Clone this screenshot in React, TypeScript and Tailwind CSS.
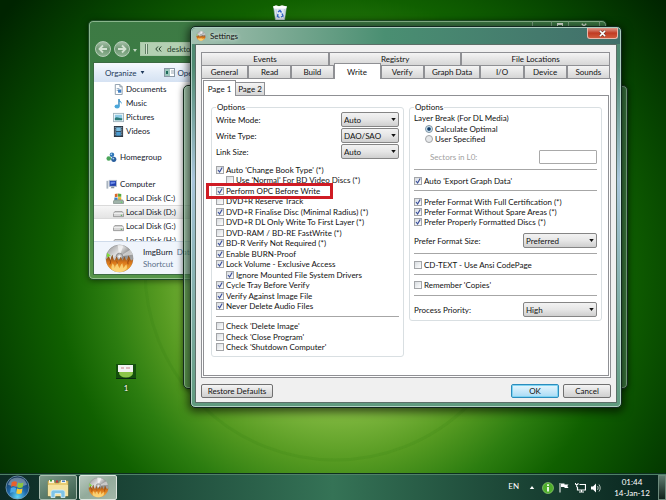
import { clsx } from 'clsx'
import type { ReactNode } from 'react'

const categoryTabs = [
  { label: 'Events', size: 'flex-[128]' },
  { label: 'Registry', size: 'flex-[132]' },
  { label: 'File Locations', size: 'flex-[149]' }
]

const settingTabs = [
  { label: 'General', size: 'flex-[47]' },
  { label: 'Read', size: 'flex-[43]' },
  { label: 'Build', size: 'flex-[42]' },
  { label: 'Write', size: 'flex-[47]' },
  { label: 'Verify', size: 'flex-[43]' },
  { label: 'Graph Data', size: 'flex-[57]' },
  { label: 'I/O', size: 'flex-[43]' },
  { label: 'Device', size: 'flex-[43]' },
  { label: 'Sounds', size: 'flex-[43]' }
]

const writeOptions = [
  { label: "Auto 'Change Book Type' (*)", checked: true },
  { label: "Use 'Normal' For BD Video Discs (*)", indent: true },
  { label: 'Perform OPC Before Write', checked: true, marked: true },
  { label: 'DVD+R Reserve Track' },
  { label: 'DVD+R Finalise Disc (Minimal Radius) (*)', checked: true },
  { label: 'DVD+R DL Only Write To First Layer (*)' },
  { label: 'DVD-RAM / BD-RE FastWrite (*)' },
  { label: 'BD-R Verify Not Required (*)', checked: true },
  { label: 'Enable BURN-Proof', checked: true },
  { label: 'Lock Volume - Exclusive Access', checked: true },
  { label: 'Ignore Mounted File System Drivers', checked: true, indent: true },
  { label: 'Cycle Tray Before Verify', checked: true },
  { label: 'Verify Against Image File', checked: true },
  { label: 'Never Delete Audio Files', checked: true }
]

const afterOptions = ["Check 'Delete Image'", "Check 'Close Program'", "Check 'Shutdown Computer'"]

const libraries = ['Documents', 'Music', 'Pictures', 'Videos']
const disks = ['Local Disk (C:)', 'Local Disk (D:)', 'Local Disk (G:)', 'Local Disk (H:)']

function Disc({ className }: { className?: string }) {
  return (
    <svg viewBox="0 0 30 30" className={className} aria-hidden="true">
      <defs>
        <linearGradient id="disc" x1="0" y1="0" x2="1" y2="1">
          <stop offset="0" stopColor="#8c8c8c" />
          <stop offset="0.35" stopColor="#dedede" />
          <stop offset="0.55" stopColor="#8e8e8e" />
          <stop offset="1" stopColor="#c8c8c8" />
        </linearGradient>
        <linearGradient id="flame" x1="0" y1="0" x2="0" y2="1">
          <stop offset="0" stopColor="#6b4420" />
          <stop offset="0.45" stopColor="#d9761a" />
          <stop offset="1" stopColor="#f9b63c" />
        </linearGradient>
      </defs>
      <circle cx="15" cy="15" r="14" fill="url(#disc)" stroke="#8b8b8b" strokeWidth="0.6" />
      <path d="M15 13 13 1a14 14 0 0 1 6 .5z" fill="#fff" opacity="0.6" />
      <path d="M15 13 26 6a14 14 0 0 1 2.5 5z" fill="#fff" opacity="0.5" />
      <circle cx="15" cy="13" r="3.4" fill="#bdbdbd" stroke="#777" strokeWidth="0.7" />
      <circle cx="15" cy="13" r="1.3" fill="#f4f4f4" />
      <path
        d="M1 15c1 1 2-1 2-3 2 2 2 3 3 5 0-2 0-4 2-6 0 3 1 5 2 6 1-1 1-3 2-4 1 1 1 3 2 4 1-1 2-2 2-4 1 1 1 2 2 4 1-1 1-2 2-4 1 1 1 3 2 4 1-1 2-3 2-5 2 2 2 4 3 5 1 0 2-1 2-2C29 23 23 29 15 29S1 23 1 15z"
        fill="url(#flame)"
      />
      <path d="M7 26c-1-2 0-4 1-6 1 2 2 2 2 5 1-2 1-4 3-6 0 3 1 4 2 6 1-1 1-4 3-5 0 2 1 3 1 5 1-1 2-3 3-4 1 2 1 4 0 5-4 4-11 4-15 0z" fill="#ffe28a" opacity="0.75" />
      <path d="M5 21c1-2 1-3 0-5M24 21c-1-2 0-3 1-5M12 18c1 1 1 2 0 3" fill="none" stroke="#8a3c0c" strokeWidth="0.8" />
      <path d="M2 9l4 3-4 2z" fill="#7ddc3c" />
    </svg>
  )
}

function CheckRow({ label, checked, indent, marked }: { label: string; checked?: boolean; indent?: boolean; marked?: boolean }) {
  return (
    <label className={clsx('relative flex h-[10px] items-center gap-[2px] whitespace-nowrap', indent && 'ml-[10px]')}>
      <span className="relative flex size-2">
        <input
          type="checkbox"
          defaultChecked={checked}
          className="peer size-2 appearance-none border border-[#a3a5a8] bg-linear-to-br from-[#d8dce0] to-white"
        />
        <svg viewBox="0 0 8 8" className="pointer-events-none absolute inset-0 hidden size-2 peer-checked:block" aria-hidden="true">
          <path d="M2 4l1.600 2L6.200 1.500" fill="none" stroke="#3b4f9a" strokeWidth="1.2" />
        </svg>
      </span>
      {label}
      {marked && <span className="pointer-events-none absolute -inset-y-[3px] -left-[10px] z-10 w-[127px] border-[3px] border-[#cf1c24]" />}
    </label>
  )
}

function SelectRow({ label, value, wide }: { label: string; value: string; wide?: boolean }) {
  return (
    <label className="flex h-[15px] items-center justify-between">
      {label}
      <span className={clsx('relative flex', wide ? 'w-[74px]' : 'w-[58px]')}>
        <select
          defaultValue={value}
          className="h-[15px] w-full appearance-none rounded-[2px] border border-[#858585] bg-linear-to-b from-[#f2f2f2] via-[#e6e6e6] to-[#cfcfcf] pl-[2px] leading-[10px]"
        >
          <option>{value}</option>
        </select>
        <svg viewBox="0 0 6 4" className="pointer-events-none absolute top-[6px] right-[3px] h-[3px] w-[5px]" aria-hidden="true">
          <path d="M0 0h6L3 4z" fill="#111" />
        </svg>
      </span>
    </label>
  )
}

function Rule({ className }: { className?: string }) {
  return <hr className={clsx('h-px shrink-0 border-0 bg-[#a6a6a6]', className)} />
}

function Group({ children, className }: { children: ReactNode; className?: string }) {
  return (
    <fieldset className={clsx('min-w-0 rounded-[3px] border border-[#d9dfe2] px-[4px]', className)}>
      <legend className="px-px leading-[10px]">Options</legend>
      {children}
    </fieldset>
  )
}

function PushButton({ children, className }: { children: ReactNode; className: string }) {
  return <button className={clsx('h-[14px] rounded-[2px] border leading-[10px]', className)}>{children}</button>
}

function SettingsDialog() {
  return (
    <section
      aria-label="Settings"
      className="absolute top-[26px] left-[190px] flex h-[382px] w-[432px] flex-col rounded-[5px] border border-[#12281f] bg-linear-to-b from-[#4f8a72] from-10% via-[#a9c6dc] via-40% to-[#5f9a7e] px-[4px] pb-[4px] shadow-[0_2px_8px_2px_rgba(0,0,0,0.6),inset_0_0_0_1px_rgba(235,250,245,0.6)]"
    >
      <header className="-mx-[3px] mt-px flex h-[16px] shrink-0 items-center rounded-t-[4px] bg-linear-to-r from-[#a3c1b1] via-[#4a8f72] via-45% to-[#416f6a] pl-[4px]">
        <Disc className="size-[10px]" />
        <h1 className="ml-[4px] leading-[12px] text-shadow-[0_0_4px_white]">Settings</h1>
        <button
          aria-label="Close"
          className="mr-[2px] ml-auto flex h-[11px] w-[31px] items-center justify-center self-start rounded-b-[3px] border border-t-0 border-[#e9b9ad] bg-linear-to-b from-[#dd9a8c] via-[#c03a22] via-50% to-[#d05a3c]"
        >
          <svg viewBox="0 0 8 8" className="size-[7px]" aria-hidden="true">
            <path d="M1 1l6 6M7 1 1 7" stroke="#5c2a22" strokeWidth="3" />
            <path d="M1 1l6 6M7 1 1 7" stroke="#fff" strokeWidth="1.8" />
          </svg>
        </button>
      </header>

      <div className="flex min-h-0 flex-1 flex-col border border-[#5c6f68] bg-[#f0f0f0] px-[5px] pt-[7px] pb-[4px]">
        <div role="tablist" aria-label="Categories" className="mr-px flex h-[13px] shrink-0">
          {categoryTabs.map((tab) => (
            <button
              key={tab.label}
              role="tab"
              className={clsx('border border-b-0 border-[#8f9094] bg-linear-to-b from-[#f4f4f4] to-[#d6d6d6] text-center leading-[10px]', tab.size)}
            >
              {tab.label}
            </button>
          ))}
        </div>
        <div role="tablist" aria-label="Settings" className="mr-px flex h-[13px] shrink-0 items-end">
          {settingTabs.map((tab) => (
            <button
              key={tab.label}
              role="tab"
              aria-selected={tab.label === 'Write'}
              className={clsx(
                'border border-b-0 border-[#8f9094] text-center leading-[10px]',
                tab.size,
                tab.label === 'Write' ? 'z-10 -mb-px h-[16px] bg-white' : 'h-[13px] bg-linear-to-b from-[#f4f4f4] to-[#d6d6d6]'
              )}
            >
              {tab.label}
            </button>
          ))}
        </div>

        <div className="flex min-h-0 flex-1 flex-col border border-[#8f9094] bg-white px-px pt-px pb-px">
          <div role="tablist" aria-label="Pages" className="flex h-[15px] shrink-0 items-end">
            <button role="tab" aria-selected="true" className="z-10 -mb-px h-[16px] w-[33px] border border-b-0 border-[#8f9094] bg-white leading-[10px]">
              Page 1
            </button>
            <button role="tab" className="h-[13px] w-[29px] border border-b-0 border-l-0 border-[#8f9094] bg-linear-to-b from-[#f4f4f4] to-[#d6d6d6] leading-[10px]">
              Page 2
            </button>
          </div>
          <div className="grid min-h-0 flex-1 grid-cols-2 gap-[5px] border border-[#8f9094] pt-[6px] pr-[6px] pb-[18px] pl-[7px]">
            <Group className="flex flex-col pb-[4px]">
              <div className="flex flex-col gap-px">
                <SelectRow label="Write Mode:" value="Auto" />
                <SelectRow label="Write Type:" value="DAO/SAO" />
                <SelectRow label="Link Size:" value="Auto" />
              </div>
              <div className="mt-[6px] flex flex-1 flex-col justify-between">
                {writeOptions.map((option) => (
                  <CheckRow key={option.label} {...option} />
                ))}
                <Rule className="my-[4px]" />
                {afterOptions.map((label) => (
                  <CheckRow key={label} label={label} />
                ))}
              </div>
            </Group>

            <Group className="flex flex-col self-start pb-[3px]">
              <div className="leading-[12px]">Layer Break (For DL Media)</div>
              {['Calculate Optimal', 'User Specified'].map((label, index) => (
                <label key={label} className="ml-[11px] flex h-[10px] items-center gap-[2px]">
                  <input
                    type="radio"
                    name="layer-break"
                    defaultChecked={index === 0}
                    className="size-2 appearance-none rounded-full border border-[#a3a5a8] bg-[#e6e8ea] checked:border-[#7f93a3] checked:bg-[radial-gradient(circle,#123a66_0_30%,#cfe6f4_55%)]"
                  />
                  {label}
                </label>
              ))}
              <label className="mt-[6px] flex h-[14px] items-center justify-between pl-[16px] text-[#a0a0a0]">
                Sectors in L0:
                <input type="text" disabled className="h-[14px] w-[58px] rounded-[1px] border border-[#a9a9a9] bg-white px-[2px]" />
              </label>
              <Rule className="mt-[5px] mb-[6px]" />
              <CheckRow label="Auto 'Export Graph Data'" checked />
              <Rule className="mt-[4px] mb-[6px]" />
              <CheckRow label="Prefer Format With Full Certification (*)" checked />
              <CheckRow label="Prefer Format Without Spare Areas (*)" checked />
              <CheckRow label="Prefer Properly Formatted Discs (*)" checked />
              <div className="mt-[6px]">
                <SelectRow label="Prefer Format Size:" value="Preferred" wide />
              </div>
              <Rule className="mt-[5px] mb-[6px]" />
              <CheckRow label="CD-TEXT - Use Ansi CodePage" />
              <Rule className="mt-[4px] mb-[5px]" />
              <CheckRow label="Remember 'Copies'" />
              <Rule className="mt-[5px] mb-[6px]" />
              <SelectRow label="Process Priority:" value="High" wide />
            </Group>
          </div>
        </div>

        <footer className="mt-[6px] flex shrink-0 gap-[4px]">
          <PushButton className="mr-auto w-[72px] border-[#707070] bg-linear-to-b from-[#f4f4f4] to-[#cfcfcf]">Restore Defaults</PushButton>
          <PushButton className="w-[48px] border-[#2c8cbc] bg-linear-to-b from-[#e6f6fd] to-[#a9dbf5] shadow-[inset_0_0_0_1px_#7fd4f2]">OK</PushButton>
          <PushButton className="w-[48px] border-[#707070] bg-linear-to-b from-[#f4f4f4] to-[#cfcfcf]">Cancel</PushButton>
        </footer>
      </div>
    </section>
  )
}

function NavIcon({ name }: { name: string }) {
  return (
    <svg viewBox="0 0 12 12" className="size-[11px] shrink-0" aria-hidden="true">
      {name === 'Documents' && (
        <>
          <path d="M2.5.5h5L10 3v8.500H2.5z" fill="#fff" stroke="#8a9aa8" />
          <path d="M7.5.5V3H10" fill="none" stroke="#8a9aa8" />
          <path d="M4 5h3M4 7h2" stroke="#8fa5b8" />
          <rect x="5.500" y="6" width="3.5" height="3.5" fill="#3f7ec2" />
        </>
      )}
      {name === 'Music' && (
        <>
          <path d="M6.500 1v8" stroke="#2f83b8" strokeWidth="1.5" />
          <path d="M6.500 1c1 2.500 3.500 2.500 3 6-.5-2-1.500-2.500-3-3z" fill="#3e9ad0" />
          <ellipse cx="4.5" cy="9.3" rx="2.8" ry="2.2" fill="#4aa7db" />
        </>
      )}
      {name === 'Pictures' && (
        <>
          <rect x="0.5" y="1.5" width="11" height="9" fill="#f3f8fa" stroke="#9eb3bd" />
          <rect x="2" y="3" width="8" height="6" fill="#8fcbe6" />
          <path d="M2 9V6.500c3-2 5 1 8 0V9z" fill="#2c7a78" />
        </>
      )}
      {name === 'Videos' && (
        <>
          <rect x="1.5" y="0.5" width="9" height="11" fill="#34495c" stroke="#26323e" />
          <rect x="3.5" y="1.5" width="5" height="4" fill="#7fc0e4" />
          <rect x="3.5" y="6.5" width="5" height="4" fill="#4c9bd0" />
          <path d="M2.5 1v10M9.5 1v10" stroke="#dfe8ee" strokeWidth="0.7" strokeDasharray="1 1" />
        </>
      )}
      {name === 'Homegroup' && (
        <>
          <circle cx="6.5" cy="3" r="2.5" fill="#2f76b8" />
          <circle cx="3" cy="7" r="2.5" fill="#4ca65a" />
          <circle cx="8.5" cy="8" r="2.8" fill="#2b5f9e" />
          <circle cx="8" cy="7.2" r="1" fill="#9fd2ee" />
          <circle cx="5.8" cy="2.4" r="0.9" fill="#b5dcf3" />
        </>
      )}
      {name === 'Computer' && (
        <>
          <rect x="0.5" y="2" width="2" height="8.5" fill="#a9b4bf" />
          <rect x="3.5" y="1.5" width="8" height="6.5" fill="#1f3fae" stroke="#b4bfcc" />
          <path d="M5 3h5v1.500L5 6z" fill="#6c8be8" />
          <path d="M6 8.500h3V10H5z" fill="#8894a0" />
        </>
      )}
      {name === 'Local Disk (C:)' && (
        <>
          <path d="M2 1l3-.5V4l-3 .5z" fill="#d9692a" />
          <path d="M5.500.5 9 1v3H5.500z" fill="#58a83c" />
          <path d="M1.500 5H5v2.500H1.500z" fill="#3c7fc4" />
          <path d="M5.500 4.500H9v3H5.500z" fill="#e5bb33" />
          <path d="M1.500 7.500h9l1 1.500v2.500H.5V9z" fill="#9fb3a9" stroke="#66786f" strokeWidth="0.6" />
          <rect x="8.500" y="9.500" width="1.5" height="1" fill="#4be04b" />
        </>
      )}
      {/Disk \([DGH]/.test(name) && (
        <>
          <path d="M2 5h8l1.500 2v3.500H.5V7z" fill="#d6d6d6" stroke="#777" strokeWidth="0.7" />
          <path d="M.5 7h11" stroke="#fff" strokeWidth="0.7" />
          <rect x="8.500" y="8.500" width="1.5" height="1" fill="#3ba03b" />
        </>
      )}
    </svg>
  )
}

function RoundArrow({ flip }: { flip?: boolean }) {
  return (
    <button
      aria-label={flip ? 'Forward' : 'Back'}
      className="flex size-[16px] items-center justify-center rounded-full border border-[#b7cdb9] bg-linear-to-b from-[#a4bfa6] via-[#6d9672] via-50% to-[#8fb392]"
    >
      <svg viewBox="0 0 10 10" className={clsx('size-[10px]', flip && 'rotate-180')} aria-hidden="true">
        <path d="M5 1.500 1.500 5 5 8.500M2 5h7" fill="none" stroke="#d3e2d2" strokeWidth="1.8" />
      </svg>
    </button>
  )
}

function ExplorerWindow() {
  return (
    <section
      aria-label="desktop"
      className="absolute top-[20px] left-[88px] flex h-[260px] w-[519px] flex-col rounded-[5px] border border-[#1d4a26] bg-linear-to-b from-[#3d7a44] via-[#3a8044] to-[#57964a] px-[4px] pb-[4px] shadow-[0_1px_6px_rgba(0,0,0,0.5),inset_0_0_0_1px_rgba(200,230,200,0.55)]"
    >
      <div className="flex h-[20px] shrink-0 items-start justify-end pr-[2px]">
        <div className="flex h-[10px] divide-x divide-[#7fa585] rounded-b-[3px] border border-t-0 border-[#7fa585]">
          <button aria-label="Minimize" className="w-[19px]" />
          <button aria-label="Maximize" className="flex w-[17px] justify-center">
            <span className="mt-[2px] h-[5px] w-[6px] border border-t-2 border-[#dfeadd]" />
          </button>
          <button aria-label="Close window" className="flex w-[30px] items-start justify-center">
            <svg viewBox="0 0 8 8" className="mt-[2px] size-[6px]" aria-hidden="true">
              <path d="M1 1l6 6M7 1 1 7" stroke="#dfeadd" strokeWidth="1.8" />
            </svg>
          </button>
        </div>
      </div>
      <div className="flex h-[21px] shrink-0 items-start gap-[3px] pl-[2px]">
        <RoundArrow />
        <RoundArrow flip />
        <svg viewBox="0 0 4 3" className="mt-[8px] h-[3px] w-[4px]" aria-hidden="true">
          <path d="M0 0h4L2 3z" fill="#bfd6bf" />
        </svg>
        <div className="mt-px flex h-[14px] flex-1 items-center border border-[#a9c8a8] bg-[#b3d0b2] pl-[4px] text-[#23402a]">
          <span className="h-[10px] w-[3px] border-x border-[#5f7f63] bg-[#d8e6d6]" />
          <svg viewBox="0 0 7 6" className="mr-[5px] ml-[7px] h-[6px] w-[7px]" aria-hidden="true">
            <path d="M3 .5.800 3 3 5.500M6.200.5 4 3l2.200 2.500" fill="none" stroke="#23402a" />
          </svg>
          desktop
        </div>
      </div>
      <div className="flex min-h-0 flex-1 flex-col border border-[#3c6b42] bg-white">
        <div className="flex h-[19px] shrink-0 items-center bg-linear-to-b from-[#f7fafe] via-[#e4edf8] via-50% to-[#d5e2f3] pl-[11px] text-[#1e395b]">
          <button className="flex items-center gap-[4px]">
            Organize
            <svg viewBox="0 0 5 4" className="h-[3px] w-[5px]" aria-hidden="true">
              <path d="M0 0h5L2.500 4z" fill="#1e395b" />
            </svg>
          </button>
          <button className="ml-[19px] flex items-center gap-[2px]">
            <svg viewBox="0 0 11 9" className="h-[9px] w-[11px]" aria-hidden="true">
              <rect x="0.5" y="0.5" width="10" height="8" fill="#fff" stroke="#8a98a6" />
              <rect x="1" y="1" width="5" height="7" fill="#9dc6bd" />
              <rect x="2" y="3" width="2" height="3" fill="#1f6c5c" />
              <path d="M7 3h3M7 5h3" stroke="#9aa7b3" />
            </svg>
            Open
          </button>
        </div>
        <nav className="flex min-h-0 flex-1 flex-col overflow-hidden text-[#15202b]">
          {libraries.map((item) => (
            <a key={item} href="#" className="flex h-[14px] shrink-0 items-center gap-[2px] pl-[19px]">
              <NavIcon name={item} />
              {item}
            </a>
          ))}
          <a href="#" className="mt-[12px] flex h-[14px] shrink-0 items-center gap-[3px] pl-[12px]">
            <NavIcon name="Homegroup" />
            Homegroup
          </a>
          <a href="#" className="mt-[13px] flex h-[14px] shrink-0 items-center gap-[3px] pl-[12px]">
            <NavIcon name="Computer" />
            Computer
          </a>
          {disks.map((disk) => (
            <a
              key={disk}
              href="#"
              className={clsx('flex h-[14px] shrink-0 items-center gap-[2px] pl-[19px]', disk.includes('D:') && 'border-y border-[#dadada] bg-linear-to-b from-[#f6f6f6] to-[#e4e4e4]')}
            >
              <NavIcon name={disk} />
              {disk}
            </a>
          ))}
        </nav>
        <div className="flex h-[33px] shrink-0 items-center border-t border-[#cfdbea] bg-[#f0f5fc] pl-[11px]">
          <Disc className="size-[29px]" />
          <div className="ml-[9px] leading-[12px]">
            <div className="text-[#15202b]">
              ImgBurn <span className="ml-[2px] text-[#5a7391]">Date modified</span>
            </div>
            <div className="text-[#5a6f8a]">Shortcut</div>
          </div>
        </div>
      </div>
    </section>
  )
}

function Taskbar() {
  return (
    <footer className="absolute inset-x-0 bottom-0 flex h-[26px] items-center border-t border-[#4f8068] bg-linear-to-r from-[#0c2a24] via-[#357356] via-50% to-[#08231d] text-white shadow-[0_-1px_0_#0d2f1f]">
      <button aria-label="Start" className="ml-[5px] size-[25px]">
        <svg viewBox="0 0 26 26" aria-hidden="true">
          <defs>
            <radialGradient id="orb" cx="0.5" cy="0.9" r="0.9">
              <stop offset="0" stopColor="#5fd6f5" />
              <stop offset="0.45" stopColor="#1d66a8" />
              <stop offset="1" stopColor="#16304f" />
            </radialGradient>
          </defs>
          <circle cx="13" cy="13" r="12" fill="url(#orb)" stroke="#7c9fb8" strokeWidth="0.8" />
          <path d="M3 10a10.500 10.500 0 0 1 20 0c-6 3-14 3-20 0z" fill="#fff" opacity="0.35" />
          <path d="M7 7.500c2-1.200 3.800-1.200 5.500-.2l-.8 5c-1.600-1-3.500-1-5.400.1z" fill="#e8602c" />
          <path d="M13.500 7.800c2 1 3.700 1 5.700 0l-.8 5c-2 1-3.900 1-5.700 0z" fill="#8cc63f" />
          <path d="M6.100 13.600c2-1.100 3.700-1 5.400 0l-.8 5c-1.700-1-3.500-1-5.400.1z" fill="#4aa8e8" />
          <path d="M12.500 14c2 1 3.700 1 5.700 0l-.8 5c-2 1-3.900 1-5.700 0z" fill="#fbc935" />
        </svg>
      </button>
      <button aria-label="Windows Explorer" className="ml-[9px] flex h-[25px] w-[38px] items-center justify-center rounded-[2px] border border-[#a9bdb0] bg-linear-to-br from-[#7d9a8a] to-[#3b5f4e]">
        <svg viewBox="0 0 24 20" className="h-[20px] w-[24px]" aria-hidden="true">
          <path d="M2 3h6l1 2h4l1-2h8v15H2z" fill="#e9cd74" stroke="#b9973f" strokeWidth="0.6" />
          <path d="M3 2h5v3H3zM15 2h5v3h-5z" fill="#f8f3dc" />
          <rect x="4" y="1.5" width="2" height="2" fill="#3f9b3c" />
          <rect x="10" y="2.5" width="2" height="2" fill="#c33" />
          <rect x="16" y="2.5" width="3" height="1.5" fill="#4a7fc6" />
          <path d="M2 7h20v11H2z" fill="#f6e3a0" />
          <path d="M5 19.500v-5C5 13 6 12 7.500 12h9c1.500 0 2.500 1 2.500 2.500v5h-4v-4H9v4z" fill="#7fc4e8" stroke="#d9f0fb" strokeWidth="0.8" />
        </svg>
      </button>
      <button aria-label="ImgBurn" className="ml-[2px] flex h-[25px] w-[38px] items-center justify-center rounded-[2px] border border-[#dde6df] bg-linear-to-br from-[#b9c9bf] via-[#93ab9b] to-[#a4b8a9]">
        <Disc className="size-[21px]" />
      </button>
      <div className="ml-auto flex h-full items-center">
        <span className="mb-[3px]">EN</span>
        <svg viewBox="0 0 6 4" className="ml-[10px] h-[3px] w-[6px]" aria-hidden="true">
          <path d="M3 0l3 4H0z" fill="#fff" />
        </svg>
        <svg viewBox="0 0 12 12" className="ml-[7px] size-[12px]" aria-hidden="true">
          <circle cx="6" cy="6" r="5.5" fill="#4fae2c" stroke="#a6dc84" strokeWidth="0.6" />
          <path d="M6 2.200V4M6 5v4.500" stroke="#fff" strokeWidth="1.7" />
        </svg>
        <svg viewBox="0 0 10 11" className="ml-[5px] h-[11px] w-[10px]" aria-hidden="true">
          <path d="M1 1v9.500" stroke="#fff" />
          <path d="M2 1.500h3.500v1h4L8.300 4l1.200 2h-4V5H2z" fill="#fff" />
        </svg>
        <svg viewBox="0 0 11 11" className="ml-[6px] size-[11px]" aria-hidden="true">
          <path d="M4.500 2.500h6v5.500H2.500V5" fill="none" stroke="#fff" strokeWidth="1.2" />
          <path d="M.5 1v1.500h2.500V1M1.700 2.500V5h1M4 10h5M6.500 8v2" fill="none" stroke="#fff" />
        </svg>
        <svg viewBox="0 0 10 10" className="ml-[5px] size-[10px]" aria-hidden="true">
          <path d="M0 3.500h2l3-3v9l-3-3H0z" fill="#fff" />
          <path d="M6.500 3c.8 1.200.8 2.800 0 4M8 1.500c1.600 2 1.600 5 0 7" fill="none" stroke="#dfe9e2" strokeWidth="0.8" />
        </svg>
        <time className="ml-[13px] w-[36px] text-center leading-[11px]">
          01:44
          <br />
          14-Jan-12
        </time>
        <button aria-label="Show desktop" className="ml-[8px] h-full w-[8px] border border-[#6d8a7c] bg-linear-to-b from-[#5f7a6e] to-[#12241d]" />
      </div>
    </footer>
  )
}

export default function App() {
  return (
    <main className="relative h-screen w-full overflow-hidden bg-[#002400] bg-[radial-gradient(ellipse_64%_86%_at_51%_56%,#9bcb55_0%,#8abf47_28%,#579b22_42%,#2c7d10_54%,#106000_66%,#064400_82%,#002400_100%)] font-['Lato','Open_Sans',sans-serif] text-[8px] leading-[10px] text-[#111]">
      <svg className="absolute inset-0 size-full" viewBox="0 0 666 500" preserveAspectRatio="none" aria-hidden="true">
        <circle cx="335" cy="270" r="190" fill="none" stroke="#1d6a08" strokeOpacity="0.1" strokeWidth="3" />
      </svg>

      <svg viewBox="0 0 16 16" className="absolute top-[5px] left-[272px] size-[16px]" role="img" aria-label="Recycle Bin">
        <path d="M1.500 1.500h13L12.500 15h-9z" fill="#dfe9f2" stroke="#9fb3c4" strokeWidth="0.6" />
        <path d="M1 1.500 4 .3l3 1L10 .2l5 1.300-1 2H2z" fill="#fff" />
        <path d="M4 4l1 9M7 4v3M12.500 4l-1 9" stroke="#b3c3d1" strokeWidth="0.7" />
        <path d="M6 7l2-1.500L9.500 7.500M10 8.500l1 2.500-2 1M7.500 12.500 5.500 11.500 6 9" fill="none" stroke="#2c62c4" strokeWidth="1.3" />
      </svg>

      <a href="#" className="absolute top-[364px] left-[116px] flex w-[20px] flex-col items-center gap-[4px] text-white text-shadow-[0_0_2px_black]">
        <svg viewBox="0 0 20 15" className="h-[15px] w-[20px]" aria-hidden="true">
          <rect width="20" height="15" fill="#14500c" />
          <ellipse cx="10" cy="9" rx="7" ry="4.5" fill="#8cc64a" />
          <rect x="2" y="1" width="15" height="7" fill="#f3f3f3" />
          <path d="M5 4h3M10 4h4" stroke="#c9848a" />
          <path d="M0 14.500h20" stroke="#0b2a12" />
        </svg>
        1
      </a>

      <ExplorerWindow />
      <div className="absolute top-[85px] left-[183px] h-[304px] w-[445px] rounded-[5px] border border-[#16301f] bg-[#5f9a6c]/60 shadow-[0_1px_6px_rgba(0,0,0,0.5),inset_0_0_0_1px_rgba(200,230,210,0.5)]" />
      <SettingsDialog />
      <Taskbar />
    </main>
  )
}
